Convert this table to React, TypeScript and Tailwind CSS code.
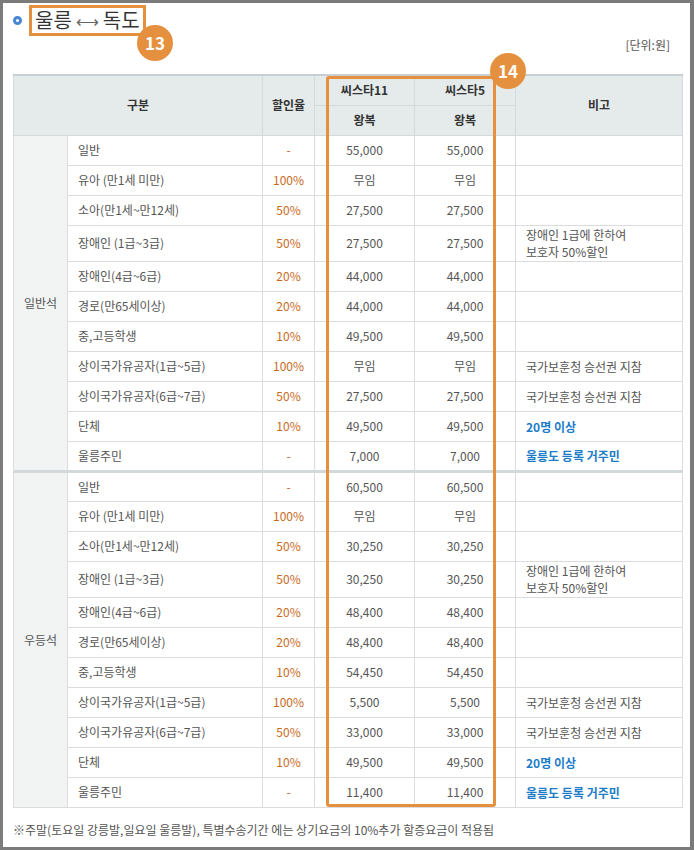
import React from 'react';

type Row = {
  name: string;
  rate: string;
  a: string;
  b: string;
  note?: string;
  noteLines?: string[];
  blue?: boolean;
  tall?: boolean;
};

const general: Row[] = [
  { name: '일반', rate: '-', a: '55,000', b: '55,000' },
  { name: '유아 (만1세 미만)', rate: '100%', a: '무임', b: '무임' },
  { name: '소아(만1세~만12세)', rate: '50%', a: '27,500', b: '27,500' },
  { name: '장애인 (1급~3급)', rate: '50%', a: '27,500', b: '27,500', noteLines: ['장애인 1급에 한하여', '보호자 50%할인'], tall: true },
  { name: '장애인(4급~6급)', rate: '20%', a: '44,000', b: '44,000' },
  { name: '경로(만65세이상)', rate: '20%', a: '44,000', b: '44,000' },
  { name: '중,고등학생', rate: '10%', a: '49,500', b: '49,500' },
  { name: '상이국가유공자(1급~5급)', rate: '100%', a: '무임', b: '무임', note: '국가보훈청 승선권 지참' },
  { name: '상이국가유공자(6급~7급)', rate: '50%', a: '27,500', b: '27,500', note: '국가보훈청 승선권 지참' },
  { name: '단체', rate: '10%', a: '49,500', b: '49,500', note: '20명 이상', blue: true },
  { name: '울릉주민', rate: '-', a: '7,000', b: '7,000', note: '울릉도 등록 거주민', blue: true },
];

const premium: Row[] = [
  { name: '일반', rate: '-', a: '60,500', b: '60,500' },
  { name: '유아 (만1세 미만)', rate: '100%', a: '무임', b: '무임' },
  { name: '소아(만1세~만12세)', rate: '50%', a: '30,250', b: '30,250' },
  { name: '장애인 (1급~3급)', rate: '50%', a: '30,250', b: '30,250', noteLines: ['장애인 1급에 한하여', '보호자 50%할인'], tall: true },
  { name: '장애인(4급~6급)', rate: '20%', a: '48,400', b: '48,400' },
  { name: '경로(만65세이상)', rate: '20%', a: '48,400', b: '48,400' },
  { name: '중,고등학생', rate: '10%', a: '54,450', b: '54,450' },
  { name: '상이국가유공자(1급~5급)', rate: '100%', a: '5,500', b: '5,500', note: '국가보훈청 승선권 지참' },
  { name: '상이국가유공자(6급~7급)', rate: '50%', a: '33,000', b: '33,000', note: '국가보훈청 승선권 지참' },
  { name: '단체', rate: '10%', a: '49,500', b: '49,500', note: '20명 이상', blue: true },
  { name: '울릉주민', rate: '-', a: '11,400', b: '11,400', note: '울릉도 등록 거주민', blue: true },
];

const font = { fontFamily: '"Noto Sans CJK KR", "Noto Sans", sans-serif' };

const Section = ({ label, rows, first }: { label: string; rows: Row[]; first?: boolean }) => (
  <>
    {rows.map((r, i) => (
      <tr key={i} className={`${r.tall ? 'h-[36px]' : 'h-[30px]'} ${i === 0 && !first ? 'border-t-[3px] border-t-[#d3d9db]' : ''}`}>
        {i === 0 && (
          <td rowSpan={rows.length} className="bg-[#f2f3f3] border border-[#dcdcdc] text-center text-[#555]">
            {label}
          </td>
        )}
        <td className="border border-[#dcdcdc] pl-[10px] text-[#555]">{r.name}</td>
        <td className="border border-[#dcdcdc] text-center text-[#c86a1c]">{r.rate}</td>
        <td className="border border-[#dcdcdc] text-center text-[#555]">{r.a}</td>
        <td className="border border-[#dcdcdc] text-center text-[#555]">{r.b}</td>
        <td className={`border border-[#dcdcdc] pl-[10px] leading-[17px] ${r.blue ? 'text-[#1c7cc8] font-bold' : 'text-[#555]'}`}>
          {r.noteLines ? r.noteLines.map((l) => <div key={l}>{l}</div>) : r.note}
        </td>
      </tr>
    ))}
  </>
);

const App = () => {
  return (
    <div
      className="relative w-[694px] h-[850px] bg-white border-t-[3px] border-l-[3px] border-b-[3px] border-r-4 border-[#7b7b7b]"
      style={font}
    >
      <div className="px-[10px] pt-[1px]">
        <div className="h-[32px] flex items-center">
          <span className="w-[9px] h-[9px] rounded-full border-[3px] border-[#4a86d0] bg-white mr-[7px]" />
          <span className="h-[31px] flex items-center border-[3px] border-[#e5903f] px-[3px] text-[20px] text-[#333] leading-none">
            울릉
            <span className="text-[16px] text-[#666] mx-[4px]">⟷</span>
            독도
          </span>
        </div>
        <div className="h-[20px] -mt-[1px] flex items-center justify-end pr-[10px] text-[12px] text-[#555]">[단위:원]</div>

        <div className="relative mt-[19px] w-[669px]">
          <table className="w-[669px] table-fixed border-collapse text-[12px] border-b border-[#cccccc]">
            <colgroup>
              <col className="w-[54px]" />
              <col className="w-[195px]" />
              <col className="w-[52px]" />
              <col className="w-[100px]" />
              <col className="w-[101px]" />
              <col className="w-[167px]" />
            </colgroup>
            <thead>
              <tr className="h-[30px] bg-[#e5eaeb] border-t-2 border-t-[#c8cfd2]">
                <th colSpan={2} rowSpan={2} className="border border-[#d4dadc] text-[#333] font-bold">구분</th>
                <th rowSpan={2} className="border border-[#d4dadc] text-[#333] font-bold">할인율</th>
                <th className="border border-[#d4dadc] text-[#333] font-bold">씨스타11</th>
                <th className="border border-[#d4dadc] text-[#333] font-bold">씨스타5</th>
                <th rowSpan={2} className="border border-[#d4dadc] text-[#333] font-bold">비고</th>
              </tr>
              <tr className="h-[30px] bg-[#e5eaeb]">
                <th className="border border-[#d4dadc] text-[#333] font-bold">왕복</th>
                <th className="border border-[#d4dadc] text-[#333] font-bold">왕복</th>
              </tr>
            </thead>
            <tbody>
              <Section label="일반석" rows={general} first />
              <Section label="우등석" rows={premium} />
            </tbody>
          </table>

          <div className="absolute left-[313px] top-[2px] w-[170px] h-[731px] border-[3px] border-[#e5903f] rounded-[3px] pointer-events-none" />
          <div className="absolute left-[477px] top-[-21px] w-[36px] h-[36px] rounded-full bg-[#e5903f] flex items-center justify-center text-white font-bold text-[17px]">
            14
          </div>
        </div>

        <div className="mt-[13px] text-[12px] text-[#555]">
          ※주말(토요일 강릉발,일요일 울릉발), 특별수송기간 에는 상기요금의 10%추가 할증요금이 적용됨
        </div>
      </div>

      <div className="absolute left-[134px] top-[22px] w-[36px] h-[36px] rounded-full bg-[#e5903f] flex items-center justify-center text-white font-bold text-[17px]">
        13
      </div>
    </div>
  );
};

export default App;
